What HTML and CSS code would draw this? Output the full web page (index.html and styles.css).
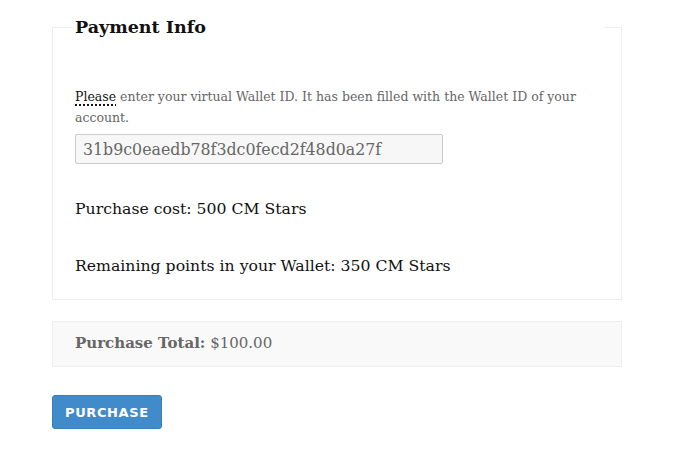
FILE: index.html
```html
<!DOCTYPE html>
<html lang="en">
<head>
    <meta charset="UTF-8">
    <meta name="viewport" content="width=device-width, initial-scale=1.0">
    <title>Payment Info</title>
    <link rel="stylesheet" href="styles.css">
</head>
<body>
    <div class="checkout">
        <fieldset class="payment-info">
            <legend>Payment Info</legend>
            <p class="wallet-note"><abbr title="required">Please</abbr> enter your virtual Wallet ID. It has been filled with the Wallet ID of your account.</p>
            <input type="text" class="wallet-id" value="31b9c0eaedb78f3dc0fecd2f48d0a27f">
            <p class="cost-line">Purchase cost: 500 CM Stars</p>
            <p class="cost-line">Remaining points in your Wallet: 350 CM Stars</p>
        </fieldset>

        <div class="purchase-total">
            <strong>Purchase Total:</strong> $100.00
        </div>

        <button type="submit" class="purchase-button">Purchase</button>
    </div>
</body>
</html>
```

FILE: styles.css
```css
body {
    margin: 0;
    font-family: "DejaVu Serif", Georgia, serif;
    background-color: #fff;
    color: #111;
}

.checkout {
    width: 570px;
    padding: 12px 0 0 52px;
}

.payment-info {
    margin: 0;
    padding: 0 22px 6px;
    border: 1px solid #eee;
    min-width: 0;
}

.payment-info legend {
    width: 527px;
    margin-left: -2px;
    padding: 0 2px;
    font-size: 17.5px;
    font-weight: bold;
    line-height: 30px;
    color: #111;
}

.wallet-note {
    margin: 44px 0 6px;
    font-size: 12.5px;
    line-height: 21px;
    color: #666;
}

.wallet-note abbr {
    color: #111;
    text-decoration: underline dotted #111;
    text-decoration-thickness: 2px;
    text-underline-offset: 3px;
}

.wallet-id {
    display: block;
    width: 368px;
    height: 30px;
    padding: 2px 7px;
    box-sizing: border-box;
    border: 1px solid #ccc;
    border-radius: 2px;
    background-color: #f7f7f7;
    font-family: "DejaVu Serif", Georgia, serif;
    font-size: 15.8px;
    color: #666;
}

.cost-line {
    margin: 0;
    padding: 34px 0 17px;
    font-size: 15.7px;
    line-height: 21px;
}

.cost-line + .cost-line {
    padding-top: 19px;
}

.purchase-total {
    margin-top: 21px;
    padding: 11px 22px 12px;
    border: 1px solid #eee;
    background-color: #f9f9f9;
    font-size: 15px;
    line-height: 21px;
    color: #666;
}

.purchase-total strong {
    color: #666;
}

.purchase-button {
    margin-top: 28px;
    padding: 0 12px;
    height: 34px;
    border: 1px solid #3a7fbd;
    border-radius: 3px;
    background-color: #428bca;
    color: #fff;
    font-family: "DejaVu Sans", Arial, sans-serif;
    font-weight: bold;
    font-size: 13px;
    letter-spacing: 0.6px;
    text-transform: uppercase;
    cursor: pointer;
}
```
